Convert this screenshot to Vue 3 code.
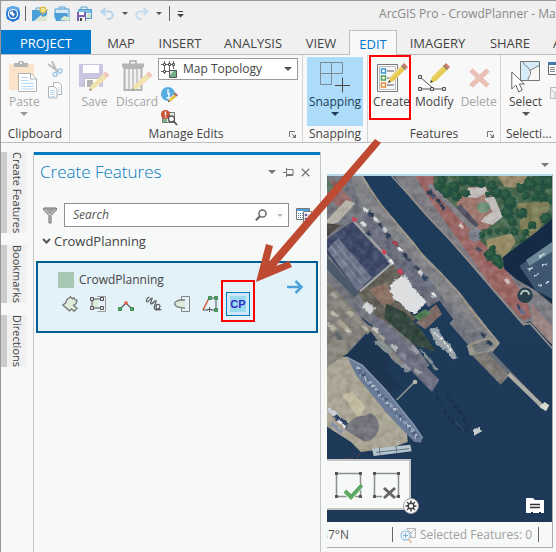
<script setup>
import { ref } from 'vue'

const tabs = ['PROJECT', 'MAP', 'INSERT', 'ANALYSIS', 'VIEW', 'EDIT', 'IMAGERY', 'SHARE', 'ANALYSIS']
const activeTab = ref('EDIT')
const docks = ['Create Features', 'Bookmarks', 'Directions']
const search = ref('')
const topology = ref('Map Topology')

// Vehicles parked along the quays: x, y, colour
const cars = [
  [118, 150, '#e3e1de'], [135, 163, '#26374f'], [150, 178, '#dcdcdc'], [164, 196, '#23344c'], [176, 208, '#c9ccd2'],
  [186, 226, '#2b3b54'], [208, 250, '#b03448'], [222, 268, '#e8e8e8'], [238, 288, '#26374f'], [248, 298, '#33435c'],
  [272, 324, '#26374f'], [284, 338, '#d8d8d8'], [295, 352, '#26405f'], [113, 192, '#e4e4e4'], [128, 222, '#26374f'],
  [84, 177, '#c8475a'], [174, 276, '#d23f55'], [224, 335, '#d23f55'], [240, 352, '#c9ccd2'], [196, 306, '#ececec'],
  [310, 97, '#2a3b55'], [322, 108, '#46516a'], [337, 124, '#2a3b55'], [350, 140, '#2a3b55'], [405, 198, '#d5c7c3'],
  [458, 268, '#4a4f5f'], [545, 364, '#d5c7c3'], [578, 440, '#33486d'], [588, 455, '#5b6e92'], [324, 405, '#e0e5e5'],
  [470, 522, '#26374f'], [490, 548, '#26374f'],
]
// Tree crowns: x, y, radius
const trees = [
  [340, 78, 16], [362, 96, 18], [385, 80, 16], [410, 62, 16], [392, 108, 16], [420, 100, 12], [350, 62, 14], [440, 62, 18],
  [465, 70, 14], [498, 78, 16], [512, 98, 16], [538, 105, 18], [552, 128, 20], [545, 158, 19], [560, 185, 14], [588, 160, 17],
  [565, 215, 12], [488, 102, 10], [585, 85, 15], [612, 72, 20], [640, 62, 22], [668, 66, 20], [640, 88, 18], [600, 108, 12],
  [628, 112, 12], [652, 112, 14], [676, 118, 16], [660, 175, 18], [618, 196, 12], [598, 218, 12], [590, 240, 9], [494, 284, 18],
  [512, 300, 18], [500, 265, 10], [522, 312, 12], [468, 226, 10], [490, 214, 9], [515, 214, 9], [540, 214, 9],
]
// Rooftops, sheds and yard objects: x, y, width, height, colour
const sheds = [
  [20, 395, 22, 12, '#a5a39a'], [45, 420, 26, 14, '#938f86'], [70, 448, 20, 14, '#b5ae9f'], [92, 470, 26, 12, '#979188'],
  [122, 424, 34, 24, '#d5d7d8'], [20, 450, 24, 12, '#c0bcae'], [40, 476, 34, 15, '#a9a290'], [10, 486, 28, 14, '#b7b4a3'],
  [30, 512, 32, 16, '#5f6468'], [62, 500, 20, 12, '#ccc8bb'], [112, 492, 22, 12, '#bab3a4'], [145, 500, 22, 12, '#c5c3bf'],
  [10, 540, 26, 14, '#b3af9d'], [40, 550, 28, 14, '#74757a'], [162, 520, 22, 12, '#a6a2a0'], [200, 548, 24, 14, '#b4b4b6'],
  [226, 575, 22, 12, '#888a95'], [260, 556, 28, 12, '#9d9ea8'], [236, 610, 26, 12, '#989aa6'], [270, 624, 20, 12, '#a3a2a8'],
  [12, 742, 46, 14, '#ccd0d6'], [30, 760, 50, 14, '#2f4263'], [18, 785, 44, 12, '#8993a8'], [38, 778, 30, 8, '#dfe1e3'],
]
const deck = Array.from({ length: 34 }, (_, i) => ({
  x: 92 + i * 5.4,
  y: 622 + i * 6.1 + ((i * 7) % 5) * 2,
  c: ['#b9c1cf', '#526786', '#9aa6bb', '#455a7c'][i % 4],
}))
</script>

<template>
  <div class="app">
    <header class="titlebar">
      <svg class="logo" width="16" height="16" viewBox="0 0 16 16">
        <path d="M2 2 8 0l6 2 1 6-1 5-6 3-6-3-1-5z" fill="#1b74d4" />
        <path d="M2 2 8 0l6 2 .5 3L8 3 1.500 5z" fill="#5aa9ee" />
        <circle cx="8" cy="8" r="4.600" fill="#2c6fc0" stroke="#fff" stroke-width="1.300" />
        <path d="m5 6 3-1v2l2 1-2 3-1-2-2-1z" fill="#fff" />
      </svg>
      <i class="bar"></i>
      <button class="qa" aria-label="New project">
        <svg width="16" height="16" viewBox="0 0 16 16">
          <path d="M4 4V2h5v2" fill="none" stroke="#5c9fd0" />
          <path d="M0 4h15v11H0z" fill="#4a9fd8" /><path d="m2 15 7-6 2 2 4-2v6z" fill="#dfe9cf" />
          <circle cx="11" cy="4" r="2.800" fill="#f6e59b" stroke="#d9b844" /><path d="M11-.5v2M11 7v2M6.500 4h1.500M14 4h2M8 1l1 1M14 1l-1 1M8 7l1-1M14 7l-1-1" stroke="#d9b844" />
        </svg>
      </button>
      <button class="qa" aria-label="Open project">
        <svg width="16" height="16" viewBox="0 0 16 16">
          <path d="M5 3V1h6v2" fill="none" stroke="#5c9fd0" /><path d="M1 3h14v9H1z" fill="#d5e9f6" stroke="#4a9fd8" />
          <path d="M0 7h13l3 8H2z" fill="#4a9fd8" /><path d="m6 14 4-4 5 1v4z" fill="#dfe9cf" />
        </svg>
      </button>
      <button class="qa" aria-label="Save project">
        <svg width="17" height="16" viewBox="0 0 17 16">
          <path d="M5 3V1h6v2" fill="none" stroke="#5c9fd0" /><path d="M2.500 3.500h13v9h-13z" fill="#e4f0f8" stroke="#4a9fd8" /><path d="M3 4h12v3H3z" fill="#7dbbe4" /><path d="m10 12 3-5 2 2v3z" fill="#cfe0c4" />
          <path d="M1 6h9v9H1z" fill="#7a63ae" /><path d="M3 6h5v3H3z" fill="#fff" /><path d="M3 11h6v4H3z" fill="#eee" /><path d="M4 12h2v3H4z" fill="#444" />
        </svg>
      </button>
      <button class="qa undo" aria-label="Undo">
        <svg width="14" height="14" viewBox="0 0 14 14"><path d="M5.500 1 1.500 4.500l4 3.500M2 4.500h7a3.600 3.600 0 0 1 0 7.500H7" fill="none" stroke="#b7d4ea" stroke-width="2" /></svg>
      </button>
      <i class="caret"></i>
      <button class="qa redo" aria-label="Redo">
        <svg width="14" height="14" viewBox="0 0 14 14"><path d="m8.500 1 4 3.500-4 3.500M12 4.500H5A3.600 3.600 0 0 0 5 12h2" fill="none" stroke="#c3dcee" stroke-width="2" /></svg>
      </button>
      <i class="caret"></i>
      <i class="bar second"></i>
      <button class="qa" aria-label="Customize toolbar">
        <svg width="7" height="8" viewBox="0 0 7 8"><path d="M1 1.500h5" stroke="#444" /><path d="M0 4h7L3.500 7.500z" fill="#444" /></svg>
      </button>
      <span class="doc">ArcGIS Pro - CrowdPlanner - Map</span>
    </header>

    <nav class="tabs">
      <button v-for="(t, i) in tabs" :key="i" :class="{ project: i === 0, active: t === activeTab }" @click="activeTab = t">{{ t }}</button>
    </nav>

    <section class="ribbon">
      <div class="group clipboard">
        <div class="tools">
          <button class="tool off">
            <svg width="30" height="33" viewBox="0 0 30 33">
              <path d="M0 4h25v26H0z" fill="#fbe3c9" /><path d="M5 3h4c0-3 6-3 6 0h4v4H5z" fill="#b5b5b5" /><circle cx="12" cy="3" r="1" fill="#fff" />
              <path d="M9.500 13.500H22l5.500 5.500v12.500h-18z" fill="#fff" stroke="#aeb4b8" /><path d="M21.500 13.500V19H27" fill="none" stroke="#aeb4b8" />
              <path d="M12 17.500h7M12 20.500h7M12 23.500h13M12 26.500h13M12 29h13" stroke="#b5d9f0" />
            </svg>
            <span>Paste</span><i class="caret"></i>
          </button>
          <div class="stack">
            <button class="mini" aria-label="Cut">
              <svg width="15" height="17" viewBox="0 0 15 17"><path d="m0 3 11 8M4 0l5 11" stroke="#b9bdc0" stroke-width="2" /><circle cx="12" cy="10" r="2" fill="none" stroke="#9fcbe8" stroke-width="1.500" /><circle cx="7" cy="13.500" r="2" fill="none" stroke="#9fcbe8" stroke-width="1.500" /></svg>
            </button>
            <button class="mini" aria-label="Copy">
              <svg width="15" height="17" viewBox="0 0 15 17"><path d="M5.500.5h5l3 3v9h-8z" fill="#fff" stroke="#b0b3b6" /><path d="M.5 4.500h6l2.500 3v8.500H.5z" fill="#fff" stroke="#b0b3b6" /><path d="M2 8.500h5M2 10.500h5M2 12.500h5M2 14.500h5M10 6h2M10 8h2M10 10h2" stroke="#b5d9f0" /></svg>
            </button>
          </div>
        </div>
        <footer>Clipboard</footer>
      </div>

      <div class="group manage">
        <div class="tools">
          <button class="tool off">
            <svg width="31" height="33" viewBox="0 0 31 33">
              <path d="M0 4h24v23H0z" fill="#cbc4e2" /><path d="M4 5h16v8H4z" fill="#fff" /><path d="M5 18h15v9H5z" fill="#fff" /><path d="M5.500 27v-8.500H20" fill="none" stroke="#bbb" /><path d="M8 20h6v7H8z" fill="#b3b3b3" />
              <path d="m10 31 1.500-5L24 14l4 4-13 11z" fill="#f1e3ae" /><path d="m24 14 2.500-2.500 4 3.500L28 18z" fill="#f0c4b8" /><path d="m10 31 1-3 2 2z" fill="#8d8d8d" />
            </svg>
            <span>Save</span>
          </button>
          <button class="tool off">
            <svg width="31" height="33" viewBox="0 0 31 33">
              <path d="M8 4V1h6v3" fill="none" stroke="#aaa" stroke-width="1.500" /><path d="M0 3.500h22v4H0z" fill="#b4b4b4" /><path d="M2.500 8h17v22h-17z" fill="#f0f0f0" stroke="#b4b4b4" stroke-width="2" /><path d="M7 9v20M11 9v20M15 9v20" stroke="#bbb" stroke-width="1.500" />
              <path d="m10 31 1.500-5L24 14l4 4-13 11z" fill="#f1e3ae" /><path d="m24 14 2.500-2.500 4 3.500L28 18z" fill="#f0c4b8" /><path d="m10 31 1-3 2 2z" fill="#8d8d8d" />
            </svg>
            <span>Discard</span>
          </button>
          <div class="stack">
            <label class="combo">
              <svg width="17" height="17" viewBox="0 0 17 17"><path d="M3.500 0v13M8.500 0v13M0 3.500h14M0 10.500h8M12.500 0v8" fill="none" stroke="#666" /><path d="M2.500 2.500h2v2h-2zM7.500 2.500h2v2h-2zM2.500 9.500h2v2h-2zM11.500 2.500h2v2h-2z" fill="#eee" stroke="#555" /><path d="M8.500 9.500h7v7h-7z" fill="#6fae84" stroke="#555" /><path d="M9 10h4l-4 4z" fill="#dbead9" /></svg>
              <select v-model="topology" aria-label="Topology"><option>Map Topology</option></select>
              <i class="caret"></i>
            </label>
            <button class="mini" aria-label="Validation status">
              <svg width="17" height="16" viewBox="0 0 17 16"><circle cx="7" cy="7" r="7" fill="#56abe0" /><path d="M6 6h2v5M5.500 11h4" fill="none" stroke="#fff" stroke-width="1.500" /><circle cx="7" cy="3.500" r="1.100" fill="#fff" /><path d="m7 15 1-3 5-5 3 2.500-6 5z" fill="#e4c34b" stroke="#fff" stroke-width=".5" /><path d="m12.500 7 1.500-1.500 3 2.500-1.500 1.500z" fill="#9b6b5d" /><path d="m7 15 .5-2 1.500 1.500z" fill="#333" /></svg>
            </button>
            <button class="mini" aria-label="Error inspector">
              <svg width="17" height="16" viewBox="0 0 17 16"><path d="M1.500 2.500h12v10h-12z" fill="#e5efe4" stroke="#777" /><path d="M2 8h4v4H2z" fill="#7fb48e" /><circle cx="4.500" cy="4.500" r="4.500" fill="#c94f33" /><path d="M4.500 1.500v4M4.500 6.500v1.300" stroke="#fff" stroke-width="1.400" /><circle cx="10.500" cy="9" r="3" fill="#fff" stroke="#555" stroke-width="1.300" /><path d="m12.500 11 3.500 4" stroke="#555" stroke-width="1.800" /></svg>
            </button>
          </div>
        </div>
        <footer>Manage Edits
          <svg class="launch" width="8" height="8" viewBox="0 0 8 8"><path d="M.5 6V.5H6" fill="none" stroke="#777" /><path d="m3 3 3 3" stroke="#777" /><path d="M7 3v4H3z" fill="#777" /></svg>
        </footer>
      </div>

      <div class="group snapping">
        <div class="tools">
          <button class="tool pressed">
            <svg width="32" height="33" viewBox="0 0 32 33"><path d="M1.500 2.500h22v11h-22zM12.500 2.500v22h-11v-22" fill="none" stroke="#7d8b96" /><path d="M23.500 17.500v15M16 25.500h15" stroke="#444" /></svg>
            <span>Snapping</span><i class="caret"></i>
          </button>
        </div>
        <footer>Snapping</footer>
      </div>

      <div class="group features">
        <div class="tools">
          <button class="tool">
            <svg width="32" height="33" viewBox="0 0 32 33">
              <path d="M1.500 4.500h20v27h-20z" fill="#fff" stroke="#777" /><path d="M3.500 6.500h16v23h-16z" fill="#f7f7f7" stroke="#bbb" />
              <path d="M5.500 9h4v4h-4z" fill="#fff" stroke="#3d96d2" stroke-width="1.400" /><path d="M5.500 16h4v4h-4z" fill="#fff" stroke="#4d9b55" stroke-width="1.400" /><path d="M5.500 23h4v4h-4z" fill="#fff" stroke="#e38b3b" stroke-width="1.400" />
              <path d="M11 11h7M11 18h3M11 25h7" stroke="#555" /><path d="m12 23 2-6L26 5l4 4-12 12z" fill="#e6c950" stroke="#f8f8f8" stroke-width=".5" /><path d="m26 5 2-2 4 4-2 2z" fill="#cd7e68" /><path d="m25 6 1-1 4 4-1 1z" fill="#777" /><path d="m12 23 1-3 2 2z" fill="#444" /><path d="m15 18 11-11" stroke="#f2df87" />
            </svg>
            <span>Create</span>
          </button>
          <button class="tool">
            <svg width="32" height="33" viewBox="0 0 32 33">
              <path d="m2 17 14 12M2 29h24" fill="none" stroke="#555" /><path d="M.5 15.500h3v3h-3zM.5 27.500h3v3h-3zM12.500 27.500h3v3h-3zM24.500 27.500h3v3h-3z" fill="#ddd" stroke="#555" />
              <path d="m12 23 2-6L26 5l4 4-12 12z" fill="#e6c950" /><path d="m26 5 2-2 4 4-2 2z" fill="#cd7e68" /><path d="m25 6 1-1 4 4-1 1z" fill="#777" /><path d="m12 23 1-3 2 2z" fill="#444" /><path d="m15 18 11-11" stroke="#f2df87" />
            </svg>
            <span>Modify</span>
          </button>
          <button class="tool off">
            <svg width="32" height="33" viewBox="0 0 32 33"><path d="m8 10 17 16M25 10 8 26" stroke="#eabfb4" stroke-width="5" /></svg>
            <span>Delete</span>
          </button>
        </div>
        <footer>Features
          <svg class="launch" width="8" height="8" viewBox="0 0 8 8"><path d="M.5 6V.5H6" fill="none" stroke="#777" /><path d="m3 3 3 3" stroke="#777" /><path d="M7 3v4H3z" fill="#777" /></svg>
        </footer>
      </div>

      <div class="group selection">
        <div class="tools">
          <button class="tool">
            <svg width="30" height="33" viewBox="0 0 30 33"><path d="M9.500 1.500h19v19h-19z" fill="#d6ebf8" stroke="#777" /><path d="M19 10 28 6v14H17z" fill="#f8f8f8" /><path d="M12 1.500c1 5 6 5 7 9l9-5M19 10.500c2 4-2 6-2 10" fill="none" stroke="#777" /><path d="m.8 12 0 17 4-4 3 7 3.500-2-3-6h5z" fill="#fff" stroke="#666" /></svg>
            <span>Select</span><i class="caret"></i>
          </button>
          <div class="stack">
            <button class="mini" aria-label="Attributes"><svg width="16" height="14" viewBox="0 0 16 14"><path d="M.5.500h15v12H.5z" fill="#fff" stroke="#666" /><path d="M0 0h16v3H0z" fill="#3e78ad" /><path d="M2 5.500h5M2 7.500h5M2 9.500h5M9 5.500h5M9 7.500h5" stroke="#888" /></svg></button>
            <button class="mini" aria-label="Clear selection"><svg width="16" height="14" viewBox="0 0 16 14"><path d="M2.500.5h12v11h-12zM3 2l4 4 5-4M7 6v5" fill="#f3f3f3" stroke="#bbb" /></svg></button>
          </div>
        </div>
        <footer>Selecti...</footer>
      </div>
    </section>

    <main class="work">
      <aside class="docks">
        <button v-for="d in docks" :key="d">{{ d }}</button>
      </aside>

      <section class="pane">
        <div class="pane-head">
          <h1>Create Features</h1>
          <i class="caret gray"></i>
          <button class="mini" aria-label="Auto hide"><svg width="11" height="9" viewBox="0 0 11 9"><path d="M0 4.500h3.500M3.500 0v9M4 1.500h6v6H4M4 6.500h6" fill="none" stroke="#777" /></svg></button>
          <button class="mini" aria-label="Close"><svg width="9" height="9" viewBox="0 0 9 9"><path d="m.7.7 7.600 7.600M8.300.7.7 8.300" stroke="#777" stroke-width="1.300" /></svg></button>
        </div>
        <div class="search-row">
          <button class="mini" aria-label="Filter"><svg width="14" height="17" viewBox="0 0 14 17"><path d="M.7 1h12.600v2L8 8.500V16H6V8.500L.7 3z" fill="#d5d7d8" stroke="#666" /><path d="M1 1.500h12L8 7H6z" fill="#777" opacity=".55" /></svg></button>
          <label class="search">
            <input v-model="search" placeholder="Search" aria-label="Search" />
            <svg width="12" height="12" viewBox="0 0 12 12"><circle cx="7.500" cy="4.500" r="3.600" fill="none" stroke="#666" stroke-width="1.500" /><path d="M5 7.200.8 11.300" stroke="#666" stroke-width="2" /></svg>
            <i class="caret pale"></i>
          </label>
          <button class="mini" aria-label="Manage templates"><svg width="17" height="17" viewBox="0 0 17 17"><path d="M.5 1.500h13v11H.5z" fill="#fff" stroke="#777" /><path d="M1 2h12v2H1z" fill="#4da3da" /><path d="M2 6.500h5M2 8.500h5M2 10.500h5" stroke="#4d7fa8" stroke-dasharray="1 1" /><path d="M7.500 4.500h8v11h-8z" fill="#fff" stroke="#777" /><path d="M9 7h2v2H9zM9 11h2v2H9zM12 8h2M12 12h2" fill="#7a63ae" stroke="#7a63ae" stroke-width=".6" /></svg></button>
        </div>
        <button class="layer"><svg width="9" height="7" viewBox="0 0 9 7"><path d="m1 1 3.500 3.500L8 1" fill="none" stroke="#555" stroke-width="2" /></svg>CrowdPlanning</button>

        <article class="template">
          <div class="body">
            <div class="name"><i class="swatch"></i>CrowdPlanning</div>
            <div class="shapes">
              <button aria-label="Polygon"><svg width="16" height="16" viewBox="0 0 16 16"><path d="M5 3.500 8.500.8l2 2 1.500-1 1 2 2 .5-1 3.500-2.500 1.500 3.500 3-3 3-2.500-2.500-2 2L.8 9l2.700-2z" fill="#dcecd8" stroke="#777" stroke-width="1.300" /></svg></button>
              <button aria-label="Rectangle"><svg width="16" height="16" viewBox="0 0 16 16"><path d="M7.500.5h8v15h-8" fill="none" stroke="#999" /><path d="M2 3h6v9H2z" fill="#dcecd8" /><path d="M2 3h10M2 12h10M2 3v9" stroke="#555" /><path d="M.5 1.500h3v3h-3zM10.500 1.500h3v3h-3zM.5 10.500h3v3h-3zM10.500 10.500h3v3h-3z" fill="#ddd" stroke="#555" /></svg></button>
              <button aria-label="Line"><svg width="16" height="16" viewBox="0 0 16 16"><path d="m2 13 6-6 6 6" fill="none" stroke="#555" stroke-width="1.200" /><path d="M.5 11.500h3v3h-3zM12.500 11.500h3v3h-3z" fill="#58a668" stroke="#3f8850" /><path d="M6.500 5.500h3v3h-3z" fill="#e8512d" /></svg></button>
              <button aria-label="Freehand"><svg width="16" height="16" viewBox="0 0 16 16"><path d="M3.500 1C0 2 0 6 1.500 6S5 1.500 6 2 3.500 7.500 5 8s4-4 5-3.500-2.500 5.500-1.500 8c1 2.500 5.500 1 5.500-2s-4-3-4 0 3 4 5.500 3" fill="none" stroke="#555" stroke-width="1.200" /></svg></button>
              <button aria-label="Autocomplete polygon"><svg width="16" height="16" viewBox="0 0 16 16"><path d="M11 4H5C1 5 0 7 .8 9s2.700 3 4.200 3h6z" fill="#dcecd8" /><path d="M11 4H6.500C2 4.500 0 7 .8 8.500S4 12 11 12" fill="none" stroke="#777" stroke-width="1.300" /><path d="M7.500 4V.5h8v15h-8V12" fill="none" stroke="#888" /></svg></button>
              <button aria-label="Trace"><svg width="16" height="16" viewBox="0 0 16 16"><path d="M7 2 1 14" stroke="#d05f3e" stroke-width="1.500" /><path d="M8 2h6v11M1 14h5M9 14h5" fill="none" stroke="#555" /><path d="M6.500.5h3v3h-3zM12.500.5h3v3h-3zM12.500 12.500h3v3h-3z" fill="#58a668" stroke="#3f8850" /><path d="M7.500 11v5M5 13.500h5" stroke="#555" /></svg></button>
              <button class="cp"><span>CP</span></button>
            </div>
          </div>
          <button class="go" aria-label="Open template"><svg width="17" height="14" viewBox="0 0 17 14"><path d="M0 7h15M8.500 1l6 6-6 6" fill="none" stroke="#4da3da" stroke-width="2.500" /></svg></button>
        </article>
      </section>

      <section class="view">
        <div class="view-tabs"><i class="caret gray"></i></div>
        <div class="frame">
          <div class="map">
            <svg class="imagery" viewBox="3 48 675 1038" preserveAspectRatio="xMidYMid slice">
              <defs>
                <filter id="grain" x="0" y="0" width="100%" height="100%" color-interpolation-filters="sRGB">
                  <feTurbulence type="fractalNoise" baseFrequency=".05" numOctaves="3" seed="8" result="n" />
                  <feColorMatrix in="n" type="matrix" values="1.400 0 0 0 -.22  1.400 0 0 0 -.22  1.400 0 0 0 -.2  0 0 0 0 .3" result="g" />
                  <feComposite in="g" in2="SourceGraphic" operator="in" result="m" />
                  <feBlend in="m" in2="SourceGraphic" mode="soft-light" result="b" />
                  <feGaussianBlur in="b" stdDeviation="1.200" />
                </filter>
                <filter id="rough" color-interpolation-filters="sRGB"><feTurbulence type="fractalNoise" baseFrequency=".09" numOctaves="2" seed="3" /><feDisplacementMap in="SourceGraphic" scale="12" xChannelSelector="R" yChannelSelector="G" /><feGaussianBlur stdDeviation="1.600" /></filter>
                <linearGradient id="sea" x1="0" y1="0" x2="0" y2="1"><stop offset="0" stop-color="#1d3b5a" /><stop offset="1" stop-color="#1f3958" /></linearGradient>
              </defs>
              <path d="M0 40h690v1060H0z" fill="url(#sea)" />

              <g filter="url(#grain)">
                <!-- west quay, with parking and the long pier -->
                <path d="M0 40h106l26 45 30 45 53 62 48 55 32 45 50 46 55 60 40 55 82 96-22 26-28 31-102-116 12-12-82-110-34 38-44 52-32-14 20 40 100 130-30 34-60-66-70-76-66-52-72 66L0 600z" fill="#74777f" />
                <path d="m70 40 34 0 28 52 32 44 55 62 70 82 50 50 62 66 105 135-18 8L350 415 255 300 160 195 95 110z" fill="#838486" />
                <path d="m108 48 28 44 28 41 50 60 50 58 32 43 50 48 55 60 38 52 80 96" fill="none" stroke="#a39c8b" stroke-width="5" />
                <path d="m20 60 60 62-26 34L3 110V70z" fill="#956a69" /><path d="m3 50 34 52-15 10-19-20z" fill="#5d7460" />
                <path d="m60 120 28 10-50 55-35 15v-20z" fill="#b7b3a8" />
                <path d="m3 190 42 5-42 34z" fill="#514b47" />
                <path d="m110 170 22-12 190 215 30 42-44 26-54-62-100-118z" fill="#6c6f7c" />
                <path d="m90 385 110-70 40 40-50 40 80 80-45 38-100-60z" fill="#656259" />
                <path d="m130 390 50-22 30 50-30 30z" fill="#8d7466" />
                <path d="m180 430 60 30 50 55 40 60-65-20-90-80z" fill="#35483f" />
                <path d="m270 488 60-56 18 30-50 46z" fill="#7d6964" /><path d="m262 470 35-22 18 10-36 24z" fill="#568059" />
                <path d="M0 360 50 410l70 80 80 50 100 100-10 10-80-40-90-90-55 60-65 20z" fill="#85827d" />
                <path d="m140 460 200 200-22 35-60-60-120-130z" fill="#6d7080" />
                <path d="m422 556 40-18 34-6 24 20-24 28-25 6-40 0z" fill="#98968a" /><path d="m436 556 50-16 20 12-20 20-35 6z" fill="#777b7e" />
                <path d="m438 586 48-12 64 72-26 28z" fill="#7f7c77" />

                <!-- east bank with promenade and park -->
                <path d="M197 40h493v525l-50-50-28-32-22 10-80-95-70-80-70-78-70-76-55-65z" fill="#7f7e84" />
                <path d="M262 40h66l90 100 75 120 50 75 60 85 12 50-22 12-95-100-92-130-80-110z" fill="#9b6865" />
                <path d="m615 430 75 80v55l-70-75z" fill="#9a8482" />
                <path d="M325 40h365v130L595 250l-65 50-70-60-60-70-80-80z" fill="#4c6a50" />
                <path d="m510 40h100l-25 45-50-5z" fill="#998c6e" /><path d="m575 130 100-5-20 60-40 55-30-20z" fill="#7f8059" /><path d="m480 240 75-20 15 25-35 50-45-10z" fill="#968c66" />
                <path d="m390 130 40-50 60 0 30 90-35 35-45 10z" fill="#a07a70" />
                <path d="m425 85 52-5 10 15-35 20-32-5zM475 115l30-5 25 60-30 25-35-10 10-15 25-15z" fill="#c3bfbd" />
                <ellipse cx="472" cy="142" rx="20" ry="17" fill="#6f9179" />
                <path d="m404 133 55 62-10 8-60-58z" fill="#535363" /><path d="m310 75 150 150" stroke="#858388" stroke-width="14" />
                <circle cx="448" cy="224" r="21" fill="#7f828e" />
              </g>

              <path d="m197 48 53 58 52 60 70 74 70 80 70 82 80 92 20-4 68 76" fill="none" stroke="#968f8a" stroke-width="5" />
              <g fill="#23503f" filter="url(#rough)"><circle v-for="(t, i) in trees" :key="i" :cx="t[0]" :cy="t[1]" :r="t[2]" /></g>
              <g fill="#3a6a4b" opacity=".6" filter="url(#rough)"><circle v-for="(t, i) in trees" :key="i" :cx="t[0] - 4" :cy="t[1] - 4" :r="t[2] / 2" /></g>

              <!-- dark hall east of the park -->
              <path d="m530 292 100-75 60-50v275l-60-50-60-35-35-30z" fill="#152a45" />
              <path d="m580 318 110-78v182l-60-30z" fill="#3f5670" /><path d="m600 300 90-62v30l-80 50z" fill="#6d8999" />
              <path d="m608 330 12-8M640 290l16-8M625 350l14-10M650 320l14-10M660 370l10-8M640 380l8-6" stroke="#c9d5dc" stroke-width="5" filter="url(#rough)" />
              <circle cx="597" cy="406" r="23" fill="#283f4d" /><path d="M585 404a12 12 0 0 1 24 0" fill="none" stroke="#b8c6c0" stroke-width="6" />

              <!-- warehouses -->
              <g filter="url(#grain)">
                <path d="m78 185 116 126-100 84L3 280v-42z" fill="#3f4a67" /><path d="m3 268 34-34 100 118-42 42z" fill="#6d7589" />
                <path d="m25 245 95 115M14 258l92 112" stroke="#858b9c" stroke-width="4" />
              </g>
              <path d="m84 184 116 124-98 86" fill="none" stroke="#a5a8aa" stroke-width="6" />
              <path d="m188 376 42-30 70 78-35 42-64-52z" fill="#dcdedf" filter="url(#rough)" />
              <path d="M0 288l100 112-16 12L0 325z" fill="#4b5968" />

              <g filter="url(#rough)"><rect v-for="(s, i) in sheds" :key="i" :x="s[0]" :y="s[1]" :width="s[2]" :height="s[3]" :fill="s[4]" :transform="`rotate(40 ${s[0]} ${s[1]})`" /></g>

              <!-- inner basin and museum quay -->
              <path d="m62 590 72-76 60 78-14 34 50 60-40 10z" fill="#1d3551" />
              <path d="m145 545 20-4 28 25 4 15-20-4z" fill="#8d9694" />
              <g filter="url(#grain)">
                <path d="M0 590h65l178 230 2 26-50 18-90 12-30-30-75-48z" fill="#aaa594" />
                <path d="m50 705 28-10 40 45-20 38z" fill="#c3bca2" />
                <path d="M55 808c30-50 55-35 70-45s34 15 34 37-24 46-45 44z" fill="#75767c" />
                <path d="m0 540 60 0 6 40-40 25-26 20z" fill="#8b887e" />
              </g>
              <g filter="url(#rough)"><rect v-for="(s, i) in sheds.slice(-4)" :key="i" :x="s[0]" :y="s[1]" :width="s[2]" :height="s[3]" :fill="s[4]" :transform="`rotate(40 ${s[0]} ${s[1]})`" /></g>
              <path d="m64 592 45 24 72 76 82 102 27 40-6 14-20-3-84-88-90-112z" fill="#6b7c98" />
              <path d="m64 592 45 24 72 76 82 102 27 40" fill="none" stroke="#8c9bb0" stroke-width="4" />
              <g filter="url(#rough)"><rect v-for="(d, i) in deck" :key="i" :x="d.x" :y="d.y" width="11" height="8" :fill="d.c" /></g>
              <path d="m212 720 52-52" stroke="#8c9290" stroke-width="5" /><circle cx="267" cy="666" r="7" fill="#b5b4a9" />
              <path d="m138 866 115-12 4 20-114 14z" fill="#b9c5cc" /><path d="m150 877 100-11M160 862l2 22M210 858l2 20" stroke="#60758a" stroke-width="3" />
              <path d="M0 895c20 12 60-4 90 4l13-20" fill="none" stroke="#6d4c50" stroke-width="2" />

              <!-- moored boats and outer pier -->
              <path d="m310 508 24-8 14 30 25 22 20 42-12 6-26-32-25-14z" fill="#99a2a9" filter="url(#rough)" />
              <path d="m322 515 24 22 34 40" fill="none" stroke="#dfe1df" stroke-width="7" stroke-dasharray="9 5" filter="url(#rough)" />
              <path d="m145 545 46 28M202 590l42 46M286 570l46 60" stroke="#838d93" stroke-width="8" filter="url(#rough)" />
              <path d="m490 576 160 165" stroke="#646e78" stroke-width="12" /><path d="m548 642 104 100" stroke="#adada5" stroke-width="12" /><path d="m640 740 16-14 14 10-10 18z" fill="#d8d8ce" />
              <path d="m440 810 20-10 8 14-22 12z" fill="#c9cccc" filter="url(#rough)" />
              <path d="m332 710 28 50 30 40 40 16M360 700l50 65 20 40" fill="none" stroke="#19314c" stroke-width="9" stroke-dasharray="14 8" filter="url(#rough)" /><path d="m386 782 28 32" stroke="#3f5870" stroke-width="3" />

              <g filter="url(#rough)"><rect v-for="(c, i) in cars" :key="i" :x="c[0] - 9" :y="c[1] - 5" width="18" height="10" rx="3" :fill="c[2]" :transform="`rotate(48 ${c[0]} ${c[1]})`" /></g>
            </svg>
            <div class="edit-bar">
              <button aria-label="Finish"><svg width="29" height="29" viewBox="0 0 29 29"><path d="M2.500 2.500h24v23h-24z" fill="none" stroke="#8c8f90" stroke-width="1.500" /><path d="M1 1h3v3H1zM25 1h3v3h-3zM1 24h3v3H1zM25 24h3v3h-3z" fill="#555" /><path d="m11 20 6 6 10-12" fill="none" stroke="#f7f9f8" stroke-width="6" /><path d="m11 20 6 6 11-12" fill="none" stroke="#5fa863" stroke-width="4" /></svg></button>
              <button aria-label="Cancel"><svg width="29" height="29" viewBox="0 0 29 29"><path d="M2.500 2.500h24v23h-24z" fill="none" stroke="#8c8f90" stroke-width="1.500" /><path d="M1 1h3v3H1zM25 1h3v3h-3zM1 24h3v3H1zM25 24h3v3h-3z" fill="#555" /><path d="M10 15h14v13H10z" fill="#f7f9f8" /><path d="m12 17 11 10M23 17 12 27" stroke="#666" stroke-width="3" /></svg></button>
              <button class="gear" aria-label="Options"><svg width="16" height="16" viewBox="0 0 16 16"><circle cx="8" cy="8" r="7.500" fill="#fff" stroke="#999" /><circle cx="8" cy="8" r="2.800" fill="none" stroke="#444" stroke-width="1.500" /><path d="M8 2.500v3M8 10.500v3M2.500 8h3M10.500 8h3M4 4l2 2M10 10l2 2M12 4l-2 2M6 10l-2 2" stroke="#444" stroke-width="1.500" /></svg></button>
            </div>
            <button class="note" aria-label="Notifications"><svg width="20" height="17" viewBox="0 0 20 17"><path d="M1 1h7l2 2h9v13h-3v-1h-2v1H8v-1H6v1H1z" fill="#fff" /><path d="M5 7.500h10M5 10.500h10" stroke="#333" stroke-width="1.300" /></svg></button>
          </div>
          <div class="status">
            <span class="coord"><span>42.37°N</span></span>
            <i class="bar"></i>
            <svg width="17" height="17" viewBox="0 0 17 17"><path d="M6.500 1.500h9v9h-9M7 2l4 4 4-4M11 6v5" fill="none" stroke="#b5b5b5" /><circle cx="5.500" cy="8.500" r="4.500" fill="#eef6fb" stroke="#9fc7e2" stroke-width="1.300" /><path d="M3 8.500h5M5.500 6v5" stroke="#7aaed2" /><path d="m8.500 12 3 4" stroke="#e6c1a5" stroke-width="2" /></svg>
            <span class="sel">Selected Features: 0</span>
            <i class="bar"></i>
          </div>
        </div>
      </section>
    </main>

    <svg class="callout" width="126" height="144" viewBox="0 0 126 144"><path d="m0 143 10-38 7 2-4 16L119 0l6 4L20 127l13-5 3 6z" fill="#be4a31" /></svg>
  </div>
</template>

<style>
body { margin: 0; background: #f7f9f8; overflow-x: hidden; }
</style>

<style scoped>
* { box-sizing: border-box; }
.app {
  position: relative; display: flex; flex-direction: column; min-height: 100vh; overflow: hidden;
  border: solid #979797; border-width: 1px 0 0 1px; background: #f7f9f8;
  font-family: "Open Sans", "Noto Sans", sans-serif; font-size: 12px; line-height: 16px; color: #444;
}
button { display: block; margin: 0; padding: 0; border: 0; background: none; color: inherit; font: inherit; white-space: nowrap; }
svg { display: block; flex: none; }
.caret { flex: none; width: 0; height: 0; border: solid transparent; border-width: 4px 4px 0; border-top-color: #555; }
.caret.gray { border-top-color: #777; }
.caret.pale { border-width: 3px 3px 0; border-top-color: #bbb; }
.bar { flex: none; width: 1px; height: 15px; background: #666; }

.titlebar { display: flex; align-items: center; height: 29px; padding: 0 0 4px 4px; background: #f0f0f0; white-space: nowrap; }
.titlebar .bar { margin: 0 6px 0 4px; }
.titlebar .qa { margin-right: 6px; }
.titlebar .undo { margin: 0 7px 0 1px; }
.titlebar .redo { margin: 0 6px 0 5px; }
.titlebar .bar.second { margin: 0 7px 0 5px; }
.titlebar .caret { border-width: 3px 3px 0; margin: 0 2px 0 1px; }
.doc { margin-left: auto; margin-right: -7px; color: #8a8a8a; }

.tabs {
  display: grid; grid-template-columns: 94px 52px 66px 80px 56px 48px 81px 64px 80px;
  height: 25px; background: #f0f0f0; font-size: 13px; border-bottom: 1px solid #bdbdbd;
}
.tabs button { height: 24px; padding-top: 2px; }
.tabs .project { width: 90px; background: #0078d0; color: #fff; }
.tabs .active { height: 25px; border: solid #bdbdbd; border-width: 1px 1px 0; background: #f8f8f8; color: #0078d0; padding-top: 1px; }

.ribbon {
  display: grid; grid-template-columns: 69px 233px 65px 133px 1fr; height: 88px;
  border-bottom: 1px solid #bdbdbd; background: #f8f8f8;
}
.group { display: flex; flex-direction: column; min-width: 0; padding-top: 2px; border-right: 1px solid #d4d4d4; }
.tools { display: flex; height: 69px; }
.group footer { position: relative; text-align: center; line-height: 16px; }
.launch { position: absolute; right: 5px; top: 5px; }
.tool { display: flex; flex-direction: column; align-items: center; }
.tool > svg { margin-top: 3px; }
.tool > span { margin-top: 1px; }
.tool .caret { margin-top: 2px; }
.off { color: #a5a5a5; }
.off .caret { border-top-color: #999; }
.stack { display: flex; flex-direction: column; }
.clipboard .tools { padding-left: 8px; gap: 8px; }
.clipboard .stack { padding-top: 4px; gap: 4px; }
.manage .tools { gap: 8px; padding-left: 9px; }
.manage .tool { width: 31px; }
.manage .tool + .tool { width: 38px; }
.manage .stack { flex: 1; gap: 7px; margin: 1px 4px 0 -6px; }
.manage .mini { padding-left: 3px; }
.combo { display: flex; align-items: center; height: 22px; padding: 0 5px 0 2px; border: 1px solid #9b9b9b; background: #fff; }
.combo select { flex: 1; min-width: 0; height: 20px; padding: 0 0 0 5px; border: 0; background: none; appearance: none; color: #444; font: inherit; }
.snapping .tools { padding: 0 4px; }
.pressed { flex: 1; background: #addcfb; color: #1c3d55; }
.pressed .caret { border-top-color: #1c3d55; }
.features .tools { gap: 2px; padding-left: 1px; }
.features .tool { width: 43px; }
.features .tool:first-child { height: 65px; width: 42px; margin-top: -2px; padding-left: 3px; border: 2px solid #f00; }
.selection { border-right: 0; }
.selection .tools { gap: 6px; padding-left: 8px; overflow: hidden; }
.selection .stack { gap: 11px; padding-top: 5px; }
.selection footer { text-align: left; padding-left: 5px; }

.work { flex: 1; display: flex; padding-top: 9px; }
.docks { width: 32px; flex: none; display: flex; flex-direction: column; align-items: flex-start; gap: 12px; }
.docks button { width: 26px; border-left: 6px solid #cbcbcb; background: #f0f0f0; writing-mode: vertical-rl; font-size: 11px; line-height: 20px; text-align: left; }
.pane { flex: none; width: 288px; border: solid #c6c6c6; border-width: 0 1px; }
.pane-head { display: flex; align-items: center; gap: 7px; height: 37px; padding: 0 10px 0 6px; border-top: 3px solid #0079c1; }
.pane-head h1 { flex: 1; margin: 0; color: #0079c1; font-size: 17px; font-weight: 300; line-height: 20px; }
.search-row { display: flex; align-items: center; gap: 7px; padding: 14px 7px 0 9px; }
.search { display: flex; align-items: center; flex: 1; gap: 10px; height: 24px; padding-right: 5px; border: 1px solid #8f8f8f; background: #fff; }
.search input { flex: 1; min-width: 0; padding: 0 0 0 8px; border: 0; outline: 0; background: none; font: italic 12px/16px "Open Sans", "Noto Sans", sans-serif; }
.search input::placeholder { color: #555; opacity: 1; }
.layer { display: flex; align-items: center; gap: 3px; margin: 5px 0 11px 8px; font-size: 13px; font-weight: 500; line-height: 18px; }
.template { display: flex; margin: 0 2px; height: 72px; border: 2px solid #005e95; background: #e3f1f9; }
.body { flex: 1; padding-top: 9px; }
.name { display: flex; align-items: center; gap: 5px; padding-left: 20px; }
.swatch { width: 16px; height: 16px; background: #a8c8b4; }
.shapes { display: flex; align-items: center; gap: 12px; height: 32px; padding-left: 24px; }
.cp { position: relative; width: 24px; height: 24px; margin-left: -4px; padding: 3px; border: 1px solid #0079c1; background: #cfe8f7; }
.cp span { display: block; background: #9bdaec; color: #2c2cc8; font: bold 11px/16px "Liberation Sans", sans-serif; }
.cp::after { content: ""; position: absolute; inset: -13px -6px -7px; border: 2px solid #f00; }
.go { align-self: flex-start; margin: 17px 12px 0 0; }

.view { flex: 1; min-width: 0; display: flex; flex-direction: column; padding: 0 3px 4px 6px; }
.view-tabs { display: flex; align-items: center; justify-content: flex-end; height: 22px; padding: 4px 4px 0 0; }
.frame { flex: 1; display: flex; flex-direction: column; border: solid #ababab; border-width: 2px 1px 1px 0; border-top-color: #b5d9ef; }
.map { position: relative; flex: 1; min-height: 200px; overflow: hidden; }
.imagery { position: absolute; inset: 0; width: 100%; height: 100%; }
.edit-bar { position: absolute; left: 0; bottom: 12px; display: flex; gap: 9px; padding: 10px 8px 8px 7px; border: 2px solid #c3c5c5; border-left: 0; background: #f7f9f8; }
.gear { position: absolute; right: -10px; bottom: -6px; }
.note { position: absolute; right: 7px; bottom: 8px; }
.status { display: flex; align-items: center; height: 25px; color: #a0a0a0; white-space: nowrap; overflow: hidden; }
.coord { display: flex; justify-content: flex-end; width: 22px; margin-right: 43px; overflow: hidden; color: #555; }
.status svg { margin: 2px 3px 0 7px; }
.sel + .bar { margin-left: 6px; }
.callout { position: absolute; left: 255px; top: 138px; pointer-events: none; }
</style>
